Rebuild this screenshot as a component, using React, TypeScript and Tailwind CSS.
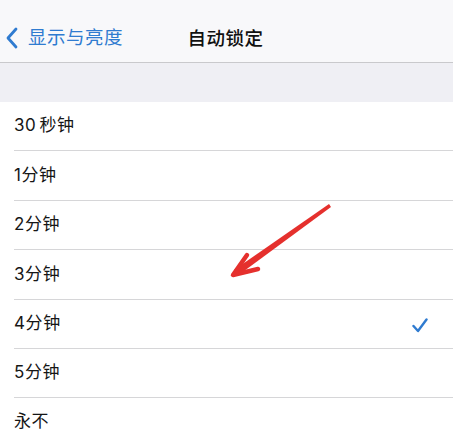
import React from "react";

const rows: { label: string; h: string }[] = [
  { label: "30秒钟", h: "h-[49px]" },
  { label: "1分钟", h: "h-[50px]" },
  { label: "2分钟", h: "h-[49px]" },
  { label: "3分钟", h: "h-[50px]" },
  { label: "4分钟", h: "h-[49px]" },
  { label: "5分钟", h: "h-[49px]" },
  { label: "永不", h: "h-[48px]" },
];

export default function App() {
  return (
    <div
      className="relative w-[453px] h-[444px] overflow-hidden bg-white"
      style={{ fontFamily: 'Inter, "Noto Sans CJK SC", sans-serif' }}
    >
      <div className="relative h-[63px] bg-[#f8f8fa] border-b border-[#c9c9cc] flex items-center">
        <div className="flex items-center pl-[6px] text-[#2f7bd0] mt-[14px]">
          <svg width="12" height="22" viewBox="0 0 12 22" className="mr-[10px]">
            <path d="M10 2 L2 11 L10 20" fill="none" stroke="#2f7bd0" strokeWidth="2.8" strokeLinecap="round" strokeLinejoin="round" />
          </svg>
          <span className="text-[18.5px] tracking-[0.5px]">显示与亮度</span>
        </div>
        <div className="absolute left-0 right-0 top-[14px] text-center text-[18.5px] font-medium text-[#111] pr-[2px] tracking-[0.5px] leading-[48px]">
          自动锁定
        </div>
      </div>
      <div className="h-[39px] bg-[#efeff4]" />
      <div className="bg-white">
        {rows.map((r, i) => (
          <div key={r.label} className="pl-[14px]">
            <div
              className={
                r.h +
                " flex items-center pr-[25px] text-[17px] text-[#161616] " +
                (i < rows.length - 1 ? "border-b border-[#d6d6d8]" : "")
              }
            >
              <span className="flex-1 tracking-[0.6px]">
                {i === 0 ? (
                  <>
                    30<span className="ml-[3px]">秒钟</span>
                  </>
                ) : (
                  r.label
                )}
              </span>
              {i === 4 && (
                <svg width="16" height="15" viewBox="0 0 16 15" className="mt-[2px]">
                  <path d="M1.5 8 L6 13 L14.5 1.5" fill="none" stroke="#2f7bd0" strokeWidth="2.4" strokeLinecap="round" strokeLinejoin="round" />
                </svg>
              )}
            </div>
          </div>
        ))}
      </div>
      <svg className="absolute left-0 top-0 pointer-events-none" width="453" height="444">
        <polygon points="329,204 331,207 240,274 234,270" fill="#e5302d" />
        <path d="M247 255 L233 275 L258 269" fill="none" stroke="#e5302d" strokeWidth="4.5" strokeLinecap="round" strokeLinejoin="round" />
      </svg>
    </div>
  );
}
